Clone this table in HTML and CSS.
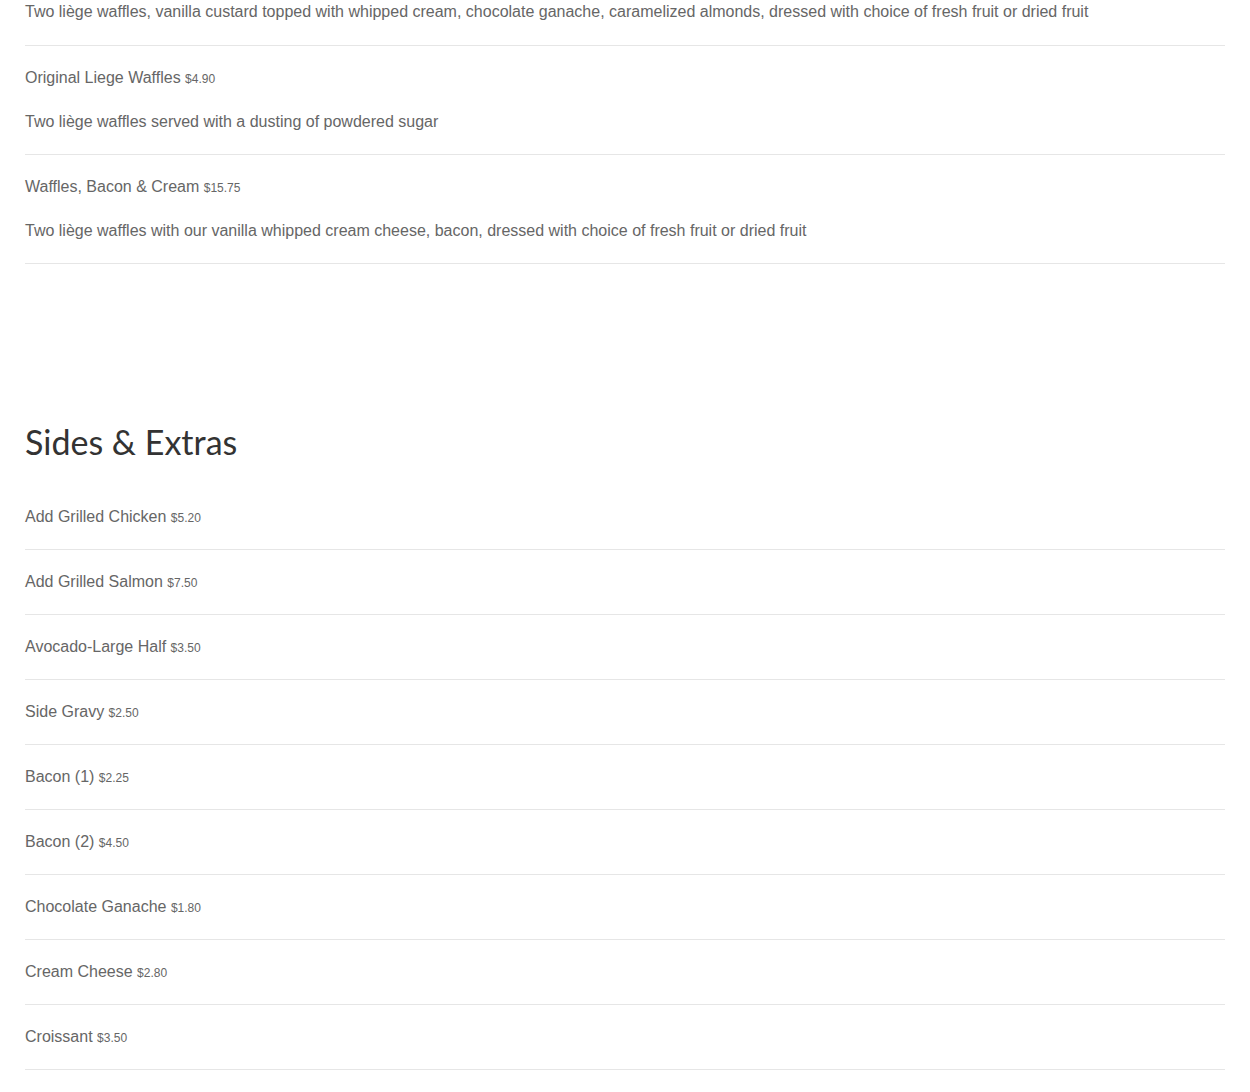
FILE: index.html
```html
<!DOCTYPE html>
<html lang="en">
<head>
    <meta charset="UTF-8">
    <meta name="viewport" content="width=device-width, initial-scale=1.0">
    <title>Menu | Waffles</title>
    <link rel="stylesheet" href="styles.css">
</head>
<body>
    <div class="menu">
        <section class="menu-section">
            <div class="menu-item menu-item-cut">
                <p class="item-desc">Two liège waffles, vanilla custard topped with whipped cream, chocolate ganache, caramelized almonds, dressed with choice of fresh fruit or dried fruit</p>
            </div>
            <div class="menu-item">
                <p class="item-name">Original Liege Waffles <span class="item-price">$4.90</span></p>
                <p class="item-desc">Two liège waffles served with a dusting of powdered sugar</p>
            </div>
            <div class="menu-item">
                <p class="item-name">Waffles, Bacon &amp; Cream <span class="item-price">$15.75</span></p>
                <p class="item-desc">Two liège waffles with our vanilla whipped cream cheese, bacon, dressed with choice of fresh fruit or dried fruit</p>
            </div>
        </section>

        <section class="menu-section">
            <h2>Sides &amp; Extras</h2>
            <div class="menu-item">
                <p class="item-name">Add Grilled Chicken <span class="item-price">$5.20</span></p>
            </div>
            <div class="menu-item">
                <p class="item-name">Add Grilled Salmon <span class="item-price">$7.50</span></p>
            </div>
            <div class="menu-item">
                <p class="item-name">Avocado-Large Half <span class="item-price">$3.50</span></p>
            </div>
            <div class="menu-item">
                <p class="item-name">Side Gravy <span class="item-price">$2.50</span></p>
            </div>
            <div class="menu-item">
                <p class="item-name">Bacon (1) <span class="item-price">$2.25</span></p>
            </div>
            <div class="menu-item">
                <p class="item-name">Bacon (2) <span class="item-price">$4.50</span></p>
            </div>
            <div class="menu-item">
                <p class="item-name">Chocolate Ganache <span class="item-price">$1.80</span></p>
            </div>
            <div class="menu-item">
                <p class="item-name">Cream Cheese <span class="item-price">$2.80</span></p>
            </div>
            <div class="menu-item">
                <p class="item-name">Croissant <span class="item-price">$3.50</span></p>
            </div>
        </section>
    </div>
</body>
</html>
```

FILE: styles.css
```css
* {
    margin: 0;
    padding: 0;
    box-sizing: border-box;
}

body {
    font-family: 'Liberation Sans', Arial, sans-serif;
    color: #666;
    background: #fff;
}

.menu {
    padding: 0 25px;
}

.menu-section + .menu-section {
    margin-top: 158px;
}

h2 {
    font-family: 'Lato', 'Open Sans', sans-serif;
    font-weight: 400;
    font-size: 34px;
    line-height: 40px;
    color: #333;
    margin-bottom: 23px;
}

.menu-item {
    padding: 20px 0;
    border-bottom: 1px solid #e6e6e6;
}

.menu-item-cut {
    padding-top: 0;
    padding-bottom: 21px;
}

.item-name {
    font-size: 16px;
    line-height: 24px;
}

.item-price {
    font-size: 12px;
    line-height: 1;
}

.item-desc {
    font-size: 16px;
    line-height: 24px;
}

.item-name + .item-desc {
    margin-top: 20px;
}
```
